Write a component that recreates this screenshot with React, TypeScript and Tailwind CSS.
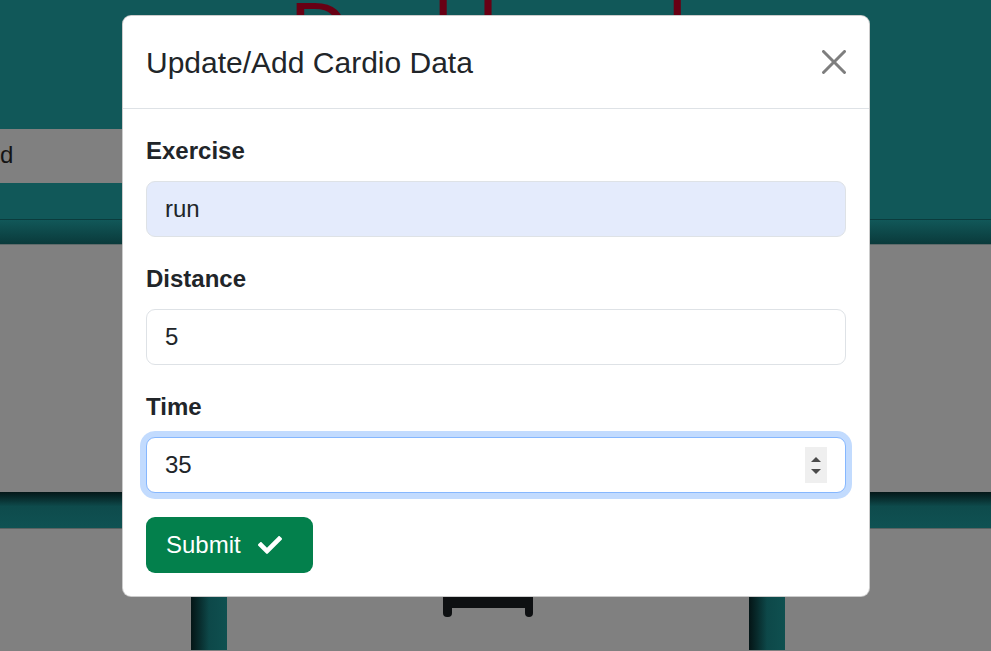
import { useState } from 'react';

function CloseIcon() {
  return (
    <svg width="24" height="24" viewBox="0 0 16 16" className="fill-black opacity-50">
      <path d="M.293.293a1 1 0 0 1 1.414 0L8 6.586 14.293.293a1 1 0 1 1 1.414 1.414L9.414 8l6.293 6.293a1 1 0 0 1-1.414 1.414L8 9.414l-6.293 6.293a1 1 0 0 1-1.414-1.414L6.586 8 .293 1.707a1 1 0 0 1 0-1.414z" />
    </svg>
  );
}

function CheckIcon() {
  return (
    <svg width="24" height="18" viewBox="0 65 512 382" className="fill-white">
      <path d="M173.898 439.404l-166.4-166.4c-9.997-9.997-9.997-26.206 0-36.204l36.203-36.204c9.997-9.998 26.207-9.998 36.204 0L192 312.69 432.095 72.596c9.997-9.997 26.207-9.997 36.204 0l36.203 36.204c9.997 9.997 9.997 26.206 0 36.204l-294.4 294.401c-9.998 9.997-26.207 9.997-36.204-.001z" />
    </svg>
  );
}

export default function App() {
  const [exercise, setExercise] = useState('run');
  const [distance, setDistance] = useState('5');
  const [time, setTime] = useState('35');

  return (
    <div className="relative h-[651px] w-[991px] overflow-hidden bg-[#808080] font-['Liberation_Sans',Arial,sans-serif] text-[#212529]">
      {/* Page behind the backdrop */}
      <div className="flex h-[129px] flex-col bg-[#115859]">
        <h1 className="-mt-[9px] pl-[290px] text-[81px] leading-none text-[#680014]">Dashboard</h1>
      </div>

      <div className="flex h-[54px] bg-[#115859]">
        <div className="flex w-[500px] items-center bg-[#808080] pb-[2px] text-[24px] text-[#141414]">d</div>
      </div>
      <div className="h-[37px] border-b border-[#0b3c3d] bg-[#115859]" />
      <div className="h-[25px] border-b border-[#5f6a6a] bg-gradient-to-b from-[#115859] to-[#0a3a3b]" />

      <div className="h-[247px]" />

      <div className="h-[37px] border-b border-[#5a6262] bg-gradient-to-b from-[#041718] via-[#0e4b4c] via-40% to-[#0f5253]" />

      <div className="flex h-[121px] pl-[191px]">
        <div className="w-[36px] bg-gradient-to-r from-[#041516] via-[#0d4849] via-50% to-[#0f5050]" />
        <div className="ml-[216px] flex w-[90px] flex-col pt-[30px]">
          <div className="h-[49px] bg-[#0e1012]" />
          <div className="flex justify-between">
            <div className="h-[9px] w-[9px] rounded-b-[4px] bg-[#0e1012]" />
            <div className="h-[9px] w-[8px] rounded-b-[4px] bg-[#0e1012]" />
          </div>
        </div>
        <div className="ml-[216px] w-[36px] bg-gradient-to-r from-[#041516] via-[#0d4849] via-50% to-[#0f5050]" />
      </div>

      {/* Modal */}
      <div className="absolute left-[122px] top-[15px] w-[748px] rounded-[9px] border border-black/20 bg-white">
        <div className="flex h-[93px] items-center justify-between border-b border-[#dee2e6] pl-[23px] pr-[23px]">
          <h5 className="text-[30px] leading-[1.5]">Update/Add Cardio Data</h5>
          <button className="flex items-center justify-center">
            <CloseIcon />
          </button>
        </div>

        <div className="px-[23px] pb-[23px] pt-[24px]">
          <div className="mb-[24px]">
            <label className="mb-[12px] block text-[24px] font-bold leading-[36px]">Exercise</label>
            <input
              value={exercise}
              onChange={(e) => setExercise(e.target.value)}
              className="block h-[56px] w-full rounded-[9px] border-[1.5px] border-[#dee2e6] bg-[#e4ebfc] px-[18px] text-[24px] outline-none"
            />
          </div>

          <div className="mb-[24px]">
            <label className="mb-[12px] block text-[24px] font-bold leading-[36px]">Distance</label>
            <input
              value={distance}
              onChange={(e) => setDistance(e.target.value)}
              className="block h-[56px] w-full rounded-[9px] border-[1.5px] border-[#dee2e6] bg-white px-[18px] text-[24px] outline-none"
            />
          </div>

          <div className="mb-[24px]">
            <label className="mb-[12px] block text-[24px] font-bold leading-[36px]">Time</label>
            <div className="flex h-[56px] w-full items-center rounded-[9px] border-[1.5px] border-[#86b7fe] bg-white pl-[18px] pr-[18px] shadow-[0_0_0_6px_rgba(13,110,253,0.25)]">
              <input
                value={time}
                onChange={(e) => setTime(e.target.value)}
                className="min-w-0 flex-1 bg-transparent text-[24px] outline-none"
              />
              <div className="flex h-[36px] w-[22px] flex-col items-center justify-center gap-[7px] bg-[#efefef]">
                <div className="h-0 w-0 border-x-[5px] border-b-[5px] border-x-transparent border-b-[#4a4a4a]" />
                <div className="h-0 w-0 border-x-[5px] border-t-[5px] border-x-transparent border-t-[#4a4a4a]" />
              </div>
            </div>
          </div>

          <button className="flex h-[56px] w-[167px] items-center rounded-[9px] bg-[#03804c] pl-[20px] text-[24px] leading-[36px] text-white">
            Submit
            <span className="ml-[17px] flex items-center">
              <CheckIcon />
            </span>
          </button>
        </div>
      </div>
    </div>
  );
}
